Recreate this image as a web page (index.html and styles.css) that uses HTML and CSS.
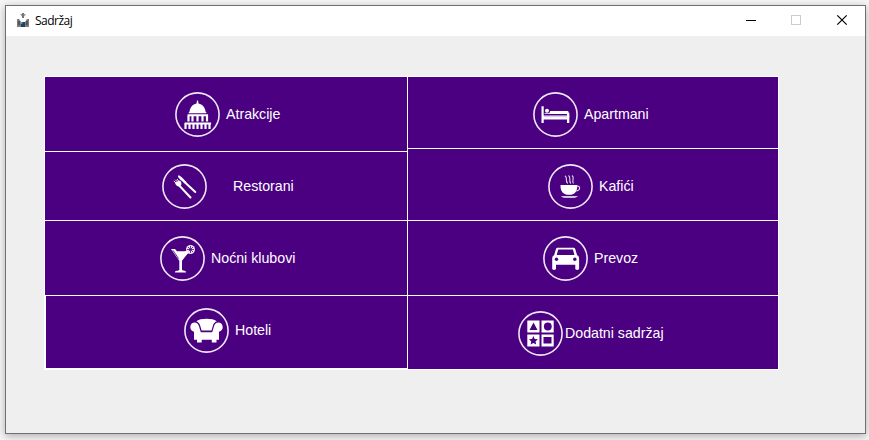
FILE: index.html
```html
<!DOCTYPE html>
<html lang="sr">
<head>
<meta charset="utf-8">
<title>Sadržaj</title>
<link rel="stylesheet" href="styles.css">
</head>
<body>
<div class="window">
  <header class="titlebar">
    <svg class="app-icon" width="12" height="15" viewBox="0 0 12 15"><path fill="#999" d="M3 1h6L6 5z"/><path fill="#777" d="M5 0h2v5H5z"/><path fill="#81797a" d="M0 6h2l2 3h4l2-3h2v8H0z"/><path fill="#555" d="M1 8h2v4H1zM9 8h2v4H9z"/><path fill="#17436d" d="M4 9h4v5H4z"/><path fill="#8ab" d="M3 8l3 2-2 1z"/></svg>
    <span class="title">Sadržaj</span>
    <svg class="controls" width="104" height="12" viewBox="0 0 104 12" fill="none" shape-rendering="crispEdges"><path stroke="#000" d="M0 6.500h10"/><path stroke="#ccc" d="M45.500 1.500h9v9h-9z"/><path stroke="#000" shape-rendering="auto" stroke-width="1.200" d="M91.300 1.300l9.400 9.400M100.700 1.300l-9.400 9.400"/></svg>
  </header>
  <main class="menu">
    <div class="column left">
      <a class="tile atrakcije">
        <svg class="icon" viewBox="0 0 45 45"><circle class="ring" cx="22.500" cy="22.500" r="21.600"/><path d="M22 8.500h1l.5 3c4 .7 6.500 4 7.200 8.500h.6v1.200H13.800V20h.6c.7-4.500 3.200-7.800 7.100-8.500zM12.500 22.300h20.600v2H12.500zM9.500 30.500h26.600v2H9.500z"/><path d="M13.500 24v5.500m4-5.500v5.500m5-5.500v5.500m5-5.500v5.500m4.500-5.500v5.500M10.500 32v5m4-5v5m4-5v5m4-5v5m4-5v5m4-5v5m4-5v5" fill="none" stroke="#fff" stroke-width="2.200"/></svg>
        <span>Atrakcije</span>
      </a>
      <a class="tile restorani">
        <svg class="icon" viewBox="0 0 45 45"><circle class="ring" cx="22.500" cy="22.500" r="21.600"/><path d="M16 11.600c1.200-.8 3 .4 8.500 6.400l-1.300 1.800c-5-3.800-7.700-6.400-7.200-8.200z"/><path d="M22.500 18l10.800 10M17 21.200l11.500 12.300" fill="none" stroke="#fff" stroke-width="2" stroke-linecap="round"/><path d="M11.800 17l4 3.500M13.300 15.800l3.700 3.700M14.900 15l3 3.500" fill="none" stroke="#fff" stroke-width="1"/><path d="M13 18.700l5-2.300c1.500 1.500 1.700 3 1.200 4.500l-2 1.700c-2-.2-3.700-1.600-4.200-3.900z"/></svg>
        <span>Restorani</span>
      </a>
      <a class="tile klubovi">
        <svg class="icon" viewBox="0 0 45 45"><circle class="ring" cx="22.500" cy="22.500" r="21.600"/><path d="M11 13h4l2 2.200h12.500L22 24.800V34c1.500.7 4 .9 4 1.700v.7H15v-.7c0-.8 3.300-1 4.300-1.700v-9.200z"/><path d="M12.800 14.200l6 8.500" stroke="#4b0082" stroke-width=".8"/><circle cx="30.500" cy="13.500" r="4.500" fill="#eee7f4"/><path d="M30.500 10v7M27 13.500h7M28 11l5 5M33 11l-5 5" stroke="#4b0082" stroke-width=".8"/><path d="M24 15.200h5.500l-3 3.500z"/></svg>
        <span>Noćni klubovi</span>
      </a>
      <a class="tile hoteli">
        <svg class="icon" viewBox="0 0 45 45"><circle class="ring" cx="22.500" cy="22.500" r="21.600"/><path d="M12.300 13.200c3.500-3.300 17-3.300 20.500 0-2.200.9-3.600 2.600-4 4.800l-1.300 4.500h-9.900L16.300 18c-.4-2.200-1.800-3.900-4-4.800zM6.300 18.900c.2-5.600 7.800-5.900 8.700-.6l1.800 6h11.400l1.800-6c.9-5.300 8.500-5 8.700.6 0 2.500-1.300 4.100-3.700 4.800v8H10v-8c-2.400-.7-3.700-2.300-3.700-4.800zM13 31h4.700v3.500H13zM27.800 31h4.700v3.500h-4.700z"/></svg>
        <span>Hoteli</span>
      </a>
    </div>
    <div class="column right">
      <a class="tile apartmani">
        <svg class="icon" viewBox="0 0 45 45"><circle class="ring" cx="22.500" cy="22.500" r="21.600"/><path d="M8.500 14.200h2.200v9.200h25.600V31H34v-3.500H10.700V31H8.500zM11.500 21.300h4.800l1-2.300h18v3H11.500z"/><path d="M36.300 20.500v5H34v-5z"/><circle cx="14" cy="18.800" r="2"/><path d="M11 24.700h23" stroke="#b99bcf" stroke-width=".6"/></svg>
        <span>Apartmani</span>
      </a>
      <a class="tile kafici">
        <svg class="icon" viewBox="0 0 45 45"><circle class="ring" cx="22.500" cy="22.500" r="21.600"/><path d="M12.500 21h16.800c.2 5.500-2 9-6 9.700h-4.500c-4.300-.8-6.500-4.200-6.300-9.700zM13 32.200h17c-1.500 1.400-3.500 1.600-5 1.600h-7c-2 0-4-.3-5-1.600z"/><path d="M28.800 22c3.700-.6 4.300 4.500-1.300 5M17 11.800c3.200 2.500-.5 3.500 2.700 7.700M20.500 11.500c3.200 2.500-.5 4 2.300 8M24 11.500c3.200 2.500-.8 4.500 1.500 8" fill="none" stroke="#e4d9ec" stroke-width="1.100"/></svg>
        <span>Kafići</span>
      </a>
      <a class="tile prevoz">
        <svg class="icon" viewBox="0 0 45 45"><circle class="ring" cx="22.500" cy="22.500" r="21.600"/><path fill-rule="evenodd" d="M14.800 11.800h15.600c1 0 1.600.5 1.900 1.500l1.800 6c1.500.6 2 1.700 2 3.500v10c0 1.500-3.800 1.500-3.800 0v-4H13v4c0 1.500-3.800 1.500-3.800 0v-10c0-1.800.5-2.900 1.900-3.500l1.800-6c.3-1 .8-1.500 1.900-1.500zm.4 1.800l-1.500 5.500h17.700l-1.500-5.500z"/><circle cx="13.500" cy="23.200" r="1.700" fill="#4b0082"/><circle cx="31.800" cy="23.200" r="1.700" fill="#4b0082"/></svg>
        <span>Prevoz</span>
      </a>
      <a class="tile dodatni">
        <svg class="icon" viewBox="0 0 45 45"><circle class="ring" cx="22.500" cy="22.500" r="21.600"/><path d="M9.300 9.500h12.200v12H9.300zM23.500 9.500h12.200v12H23.500zM9.300 23.500h12.200v12H9.300zM23.500 23.500h12.200v12H23.500z"/><path fill="#4b0082" d="M15.500 11.500l4 7.500h-8zM25.500 26h8v6.500h-8zM15.400 25l1.300 3 3.200.3-2.400 2.100.7 3.200-2.800-1.700-2.800 1.700.7-3.200-2.400-2.100 3.200-.3z"/><circle cx="29.800" cy="15.500" r="3.900" fill="#4b0082"/></svg>
        <span>Dodatni sadržaj</span>
      </a>
    </div>
  </main>
</div>
</body>
</html>
```
FILE: styles.css
```css
* { box-sizing: border-box; }
body {
  margin: 0;
  padding: 5px 3px 6px 5px;
  height: 440px;
  overflow: hidden;
  background: #f6f6f6;
}
.window {
  width: 861px;
  height: 429px;
  border: 1px solid #707070;
  background: #efefef;
  box-shadow: 0 2px 8px rgba(0, 0, 0, .3);
}
.titlebar {
  display: flex;
  align-items: center;
  height: 30px;
  padding: 0 15px 0 11px;
  background: #fff;
}
.app-icon { margin: -2px 6px 0 0; }
.title {
  font: 12px/16px "Open Sans", sans-serif;
  letter-spacing: -.5px;
  color: #000;
}
.controls { margin-left: auto; margin-top: -2px; }
.menu {
  display: grid;
  grid-template-columns: 362px 370px;
  gap: 1px;
  width: 735px;
  height: 294px;
  margin: 40px 0 0 38px;
  padding: 1px;
  background: #fff;
}
.column { display: grid; gap: 1px; }
.left { grid-template-rows: 74px 68px 74px 72px; }
.right { grid-template-rows: 71px 71px 74px 73px; }
.tile {
  display: flex;
  align-items: flex-start;
  gap: 6px;
  padding-top: 15px;
  background: #4b0082;
  color: #fff;
  font: 14.2px/45px "Liberation Sans", Arial, sans-serif;
  white-space: nowrap;
}
.icon { width: 45px; height: 45px; flex: none; fill: #fff; }
.ring { fill: none; stroke: #eee7f4; stroke-width: 1.6; }
.atrakcije { padding-left: 130px; }
.restorani { padding: 12px 0 0 117px; gap: 26px; }
.klubovi { padding-left: 115px; }
.hoteli { margin-left: 1px; padding: 12px 0 0 138px; }
.apartmani { padding-left: 125px; }
.kafici { padding-left: 140px; }
.prevoz { padding-left: 135px; }
.dodatni { padding-left: 110px; gap: 2px; }
```
